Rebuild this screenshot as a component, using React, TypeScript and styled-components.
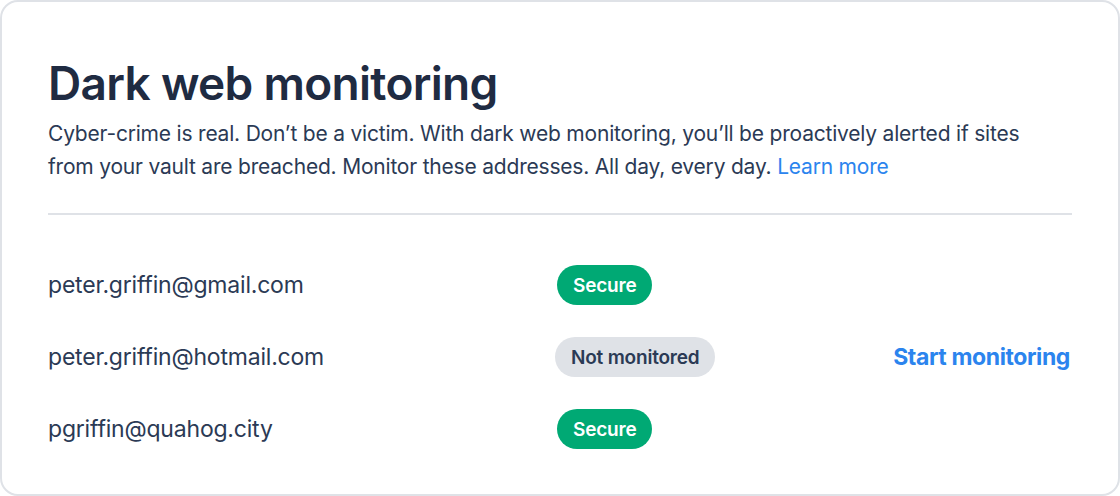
import React from 'react';
import styled, { createGlobalStyle } from 'styled-components';

const GlobalStyle = createGlobalStyle`
  html, body {
    margin: 0;
    padding: 0;
    background: #ffffff;
  }
  body {
    font-family: Inter, "Noto Sans", sans-serif;
    -webkit-font-smoothing: antialiased;
  }
`;

const Card = styled.section`
  box-sizing: border-box;
  width: 1120px;
  height: 496px;
  border: 2px solid #dfe2e7;
  border-radius: 18px;
  background: #ffffff;
  padding: 53px 46px 0 46px;
`;

const Title = styled.h1`
  margin: 0;
  font-size: 46px;
  line-height: 56px;
  font-weight: 600;
  letter-spacing: -0.7px;
  color: #1f2b42;
`;

const Intro = styled.p`
  max-width: 1000px;
  margin: 6px 0 0;
  font-size: 21px;
  line-height: 33px;
  letter-spacing: -0.2px;
  color: #2b3a55;
`;

const Link = styled.a`
  color: #2b84ee;
  text-decoration: none;
`;

const Divider = styled.hr`
  margin: 30px 0 0;
  border: 0;
  height: 2px;
  background: #dfe2e7;
`;

const List = styled.ul`
  list-style: none;
  margin: 50px 0 0;
  padding: 0;
  display: flex;
  flex-direction: column;
  gap: 32px;
`;

const Row = styled.li`
  display: grid;
  grid-template-columns: 509px 1fr auto;
  align-items: center;
  height: 40px;
`;

const Email = styled.span`
  font-size: 23px;
  letter-spacing: -0.2px;
  color: #2b3a55;
`;

const Badge = styled.span<{ $tone: 'secure' | 'idle' }>`
  justify-self: start;
  display: inline-flex;
  align-items: center;
  height: 40px;
  padding: 0 16px;
  border-radius: 20px;
  font-size: 19px;
  font-weight: 600;
  letter-spacing: -0.2px;
  background: ${(p) => (p.$tone === 'secure' ? '#00a974' : '#dfe2e7')};
  color: ${(p) => (p.$tone === 'secure' ? '#ffffff' : '#2b3a55')};
  margin-left: ${(p) => (p.$tone === 'secure' ? '0' : '-2px')};
`;

const Action = styled.a`
  font-size: 23px;
  font-weight: 700;
  letter-spacing: -0.4px;
  color: #2b84ee;
  text-decoration: none;
  margin-right: 2px;
`;

const addresses = [
  { email: 'peter.griffin@gmail.com', monitored: true },
  { email: 'peter.griffin@hotmail.com', monitored: false },
  { email: 'pgriffin@quahog.city', monitored: true },
];

const App: React.FC = () => {
  return (
    <>
      <GlobalStyle />
      <Card>
        <Title>Dark web monitoring</Title>
        <Intro>
          Cyber-crime is real. Don’t be a victim. With dark web monitoring, you’ll be proactively alerted if sites
          from your vault are breached. Monitor these addresses. All day, every day. <Link href="#">Learn more</Link>
        </Intro>
        <Divider />
        <List>
          {addresses.map((a) => (
            <Row key={a.email}>
              <Email>{a.email}</Email>
              <Badge $tone={a.monitored ? 'secure' : 'idle'}>{a.monitored ? 'Secure' : 'Not monitored'}</Badge>
              {a.monitored ? <span /> : <Action href="#">Start monitoring</Action>}
            </Row>
          ))}
        </List>
      </Card>
    </>
  );
};

export default App;
